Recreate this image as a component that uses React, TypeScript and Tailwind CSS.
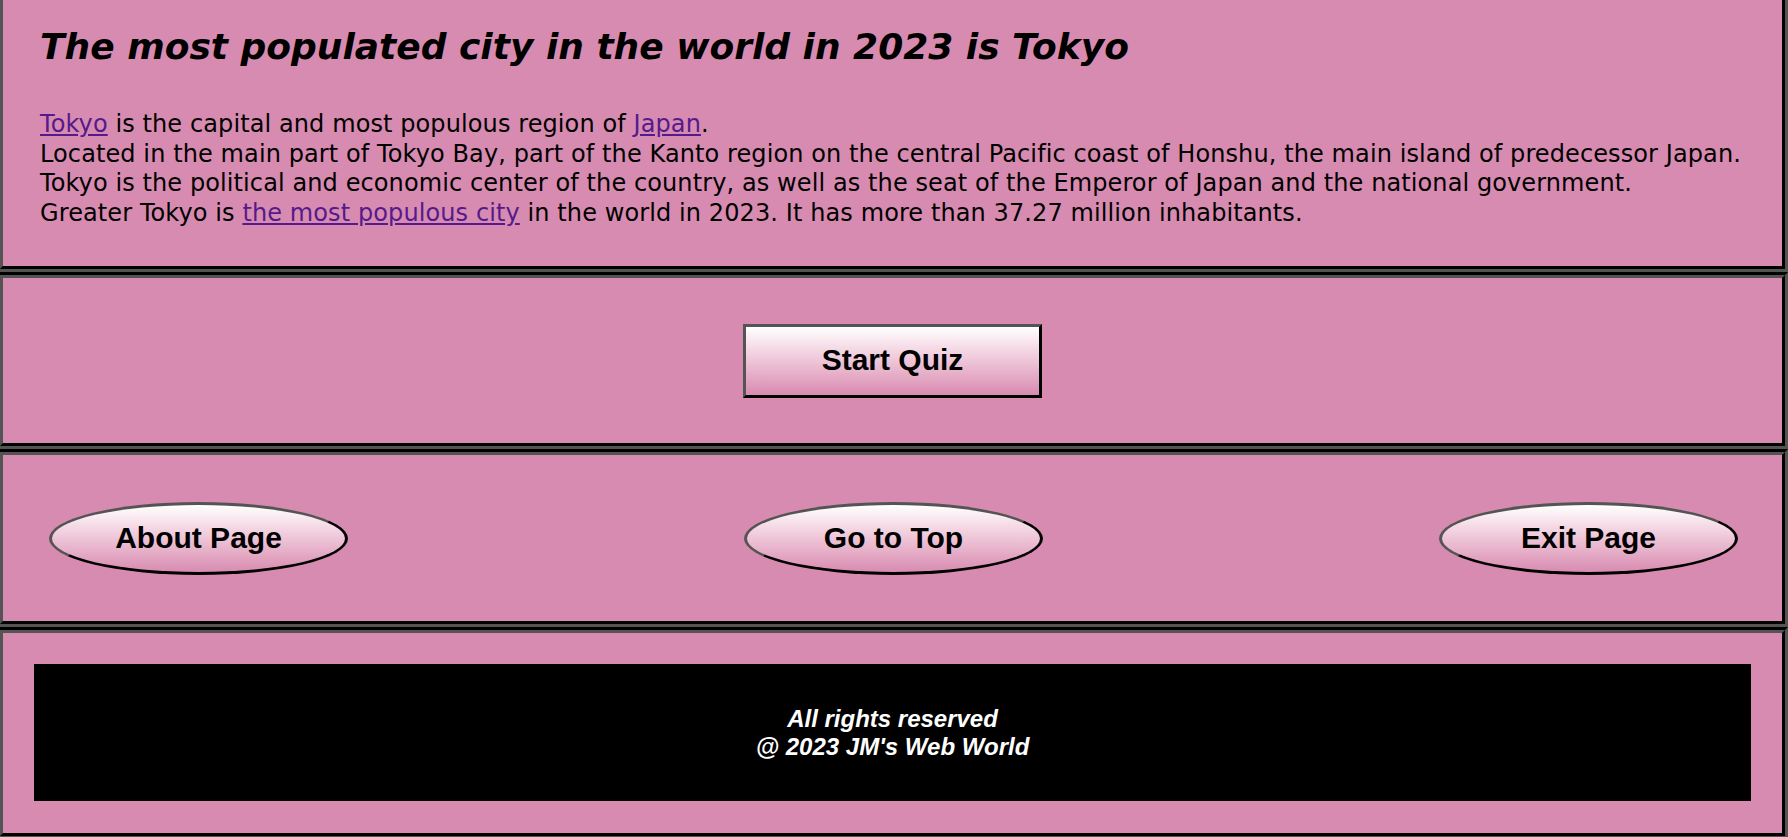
import React from 'react'

const section = 'bg-[#d88bb0] border-[6px] [border-style:groove] border-black'

function OvalButton({ label }: { label: string }) {
  return (
    <button
      className="flex h-[73px] w-[299px] items-center justify-center rounded-[50%] border-[3px] [border-style:outset] border-black bg-gradient-to-b from-white to-[#d88bb0] pb-[2px] text-[30px] font-bold text-black"
      style={{ fontFamily: '"Liberation Sans", Arial, sans-serif' }}
    >
      {label}
    </button>
  )
}

export default function App() {
  return (
    <div className="-ml-[3px] -mt-[6px] w-[calc(100%+3px)] overflow-hidden bg-black text-black">
      <section
        className={`${section} h-[278px] pl-[37px] pt-[20px]`}
        style={{ fontFamily: '"DejaVu Sans", Verdana, sans-serif' }}
      >
        <h1 className="text-[36px] font-bold italic leading-[54px]">
          The most populated city in the world in 2023 is Tokyo
        </h1>
        <p className="mt-[36px] text-[24px] leading-[29.6px] tracking-[0.1px]">
          <a href="#" className="text-[#551a8b] underline">Tokyo</a> is the capital and most populous region of{' '}
          <a href="#" className="text-[#551a8b] underline">Japan</a>.
          <br />
          Located in the main part of Tokyo Bay, part of the Kanto region on the central Pacific coast of Honshu, the main island of predecessor Japan.
          <br />
          Tokyo is the political and economic center of the country, as well as the seat of the Emperor of Japan and the national government.
          <br />
          Greater Tokyo is <a href="#" className="text-[#551a8b] underline">the most populous city</a> in the world in 2023. It has more than 37.27 million inhabitants.
        </p>
      </section>

      <section className={`${section} flex h-[177px] items-center justify-center`}>
        <button
          className="flex h-[74px] w-[299px] items-center justify-center border-[3px] [border-style:outset] border-black bg-gradient-to-b from-white to-[#d88bb0] pb-[2px] text-[30px] font-bold text-black"
          style={{ fontFamily: '"Liberation Sans", Arial, sans-serif' }}
        >
          Start Quiz
        </button>
      </section>

      <section className={`${section} flex h-[178px] items-center justify-between pl-[46px] pr-[44px]`}>
        <OvalButton label="About Page" />
        <OvalButton label="Go to Top" />
        <OvalButton label="Exit Page" />
      </section>

      <section className={`${section} h-[212px] p-[31px] pb-[29px]`}>
        <footer
          className="flex h-[137px] flex-col items-center justify-center bg-black text-[24px] font-bold italic leading-[28px] text-white"
          style={{ fontFamily: '"Liberation Sans", Arial, sans-serif' }}
        >
          <span>All rights reserved</span>
          <span>@ 2023 JM's Web World</span>
        </footer>
      </section>
    </div>
  )
}
